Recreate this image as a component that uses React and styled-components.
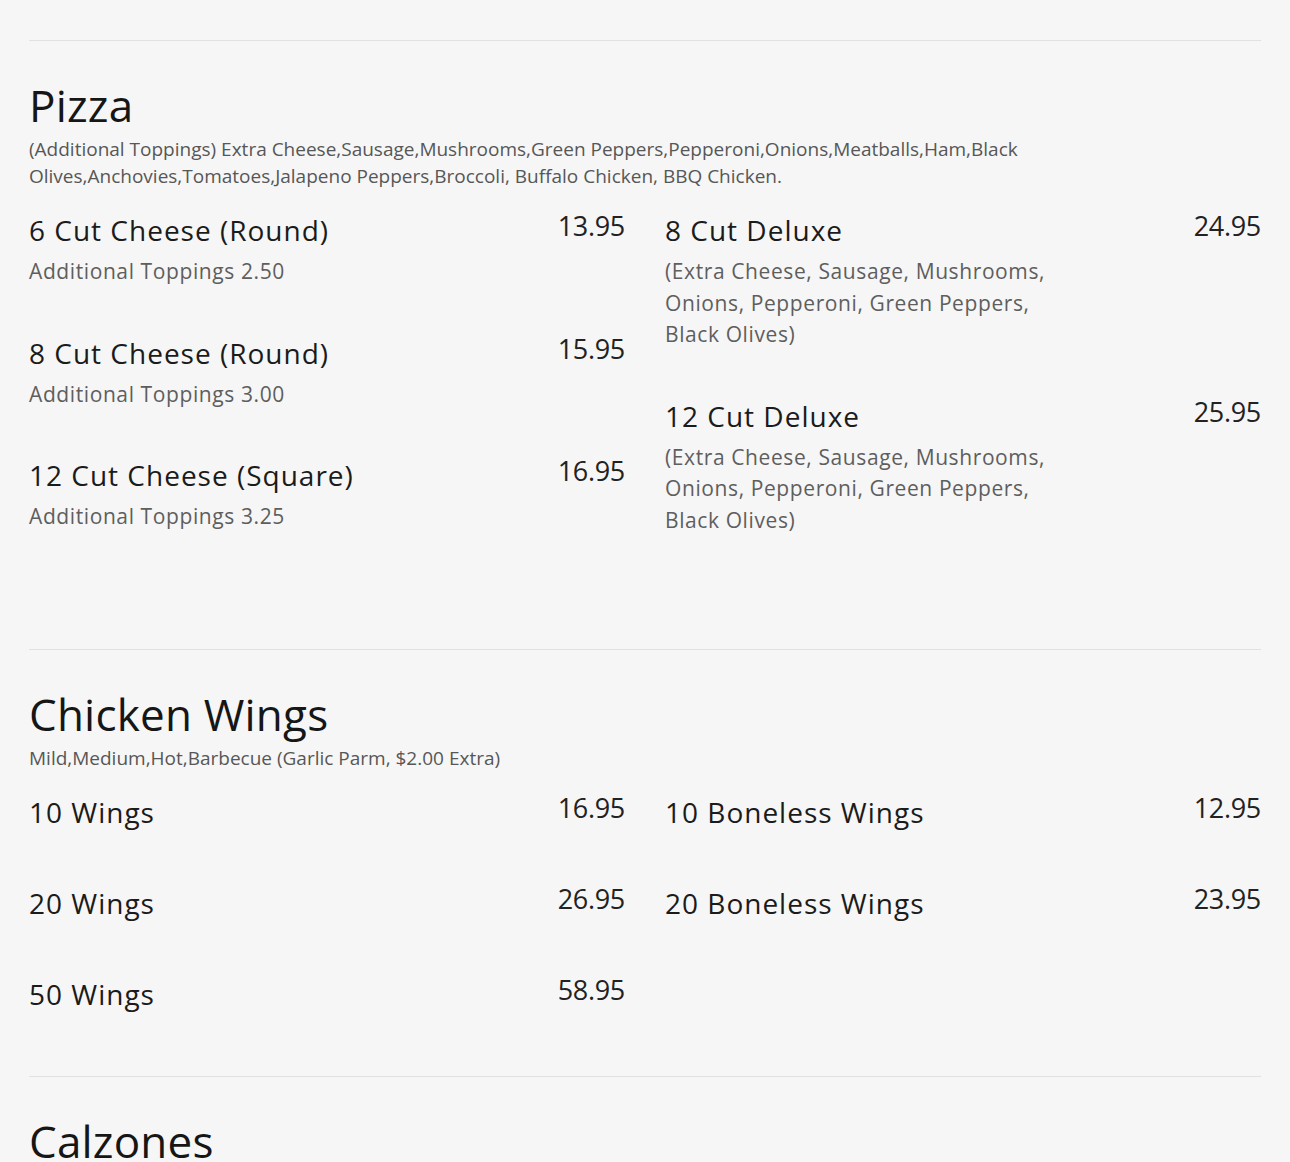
import React from "react";
import styled, { createGlobalStyle } from "styled-components";

const menu = [
    {
        title: "Pizza",
        note: "(Additional Toppings) Extra Cheese,Sausage,Mushrooms,Green Peppers,Pepperoni,Onions,Meatballs,Ham,Black Olives,Anchovies,Tomatoes,Jalapeno Peppers,Broccoli, Buffalo Chicken, BBQ Chicken.",
        tail: 69,
        columns: [
            [
                { name: "6 Cut Cheese (Round)", price: "13.95", desc: "Additional Toppings 2.50" },
                { name: "8 Cut Cheese (Round)", price: "15.95", desc: "Additional Toppings 3.00" },
                { name: "12 Cut Cheese (Square)", price: "16.95", desc: "Additional Toppings 3.25" },
            ],
            [
                { name: "8 Cut Deluxe", price: "24.95", desc: "(Extra Cheese, Sausage, Mushrooms, Onions, Pepperoni, Green Peppers, Black Olives)" },
                { name: "12 Cut Deluxe", price: "25.95", desc: "(Extra Cheese, Sausage, Mushrooms, Onions, Pepperoni, Green Peppers, Black Olives)" },
            ],
        ],
    },
    {
        title: "Chicken Wings",
        note: "Mild,Medium,Hot,Barbecue (Garlic Parm, $2.00 Extra)",
        tail: 12,
        columns: [
            [
                { name: "10 Wings", price: "16.95" },
                { name: "20 Wings", price: "26.95" },
                { name: "50 Wings", price: "58.95" },
            ],
            [
                { name: "10 Boneless Wings", price: "12.95" },
                { name: "20 Boneless Wings", price: "23.95" },
            ],
        ],
    },
    {
        title: "Calzones",
        tail: 40,
        columns: [],
    },
];

export default function App() {
    return (
        <>
            <GlobalStyle />
            <Page>
                {menu.map((section) => (
                    <Section key={section.title} $tail={section.tail}>
                        <Heading>{section.title}</Heading>
                        {section.note && <Note>{section.note}</Note>}
                        {section.columns.length > 0 && (
                            <Grid>
                                {section.columns.map((col, i) => (
                                    <Column key={i}>
                                        {col.map((item) => (
                                            <Item key={item.name}>
                                                <NameRow>
                                                    <Name>{item.name}</Name>
                                                    <Price>{item.price}</Price>
                                                </NameRow>
                                                <Desc>{item.desc}</Desc>
                                            </Item>
                                        ))}
                                    </Column>
                                ))}
                            </Grid>
                        )}
                    </Section>
                ))}
            </Page>
        </>
    );
}

const GlobalStyle = createGlobalStyle`
    html, body {
        margin: 0;
        padding: 0;
        background: #f6f6f6;
    }
    body {
        font-family: "Open Sans", sans-serif;
        color: #1b1b1b;
    }
`;

const Page = styled.div`
    padding: 40px 29px 0;
`;

const Section = styled.section`
    border-top: 1px solid #e1e1e1;
    padding-top: 34px;
    padding-bottom: ${(p) => p.$tail}px;
`;

const Heading = styled.h2`
    margin: 0;
    font-size: 44px;
    font-weight: 400;
    line-height: 60px;
    letter-spacing: 0.2px;
    color: #161616;
`;

const Note = styled.p`
    margin: 1px 0 0;
    max-width: 1000px;
    font-size: 19px;
    line-height: 27px;
    color: #575757;
`;

const Grid = styled.div`
    display: grid;
    grid-template-columns: 1fr 1fr;
    column-gap: 40px;
    align-items: start;
    margin-top: 19px;
`;

const Column = styled.div`
    display: flex;
    flex-direction: column;
`;

const Item = styled.div`
    padding-bottom: 44px;
`;

const NameRow = styled.div`
    display: flex;
    justify-content: space-between;
    align-items: flex-start;
`;

const Name = styled.h3`
    margin: 0;
    font-size: 28px;
    font-weight: 400;
    line-height: 42px;
    letter-spacing: 1px;
    color: #1b1b1b;
`;

const Price = styled.span`
    font-size: 27px;
    font-weight: 400;
    line-height: 34px;
    letter-spacing: -0.3px;
    color: #222;
`;

const Desc = styled.p`
    margin: 5px 0 0;
    max-width: 405px;
    font-size: 21px;
    line-height: 31.5px;
    letter-spacing: 0.6px;
    color: #5e5e5e;
`;
